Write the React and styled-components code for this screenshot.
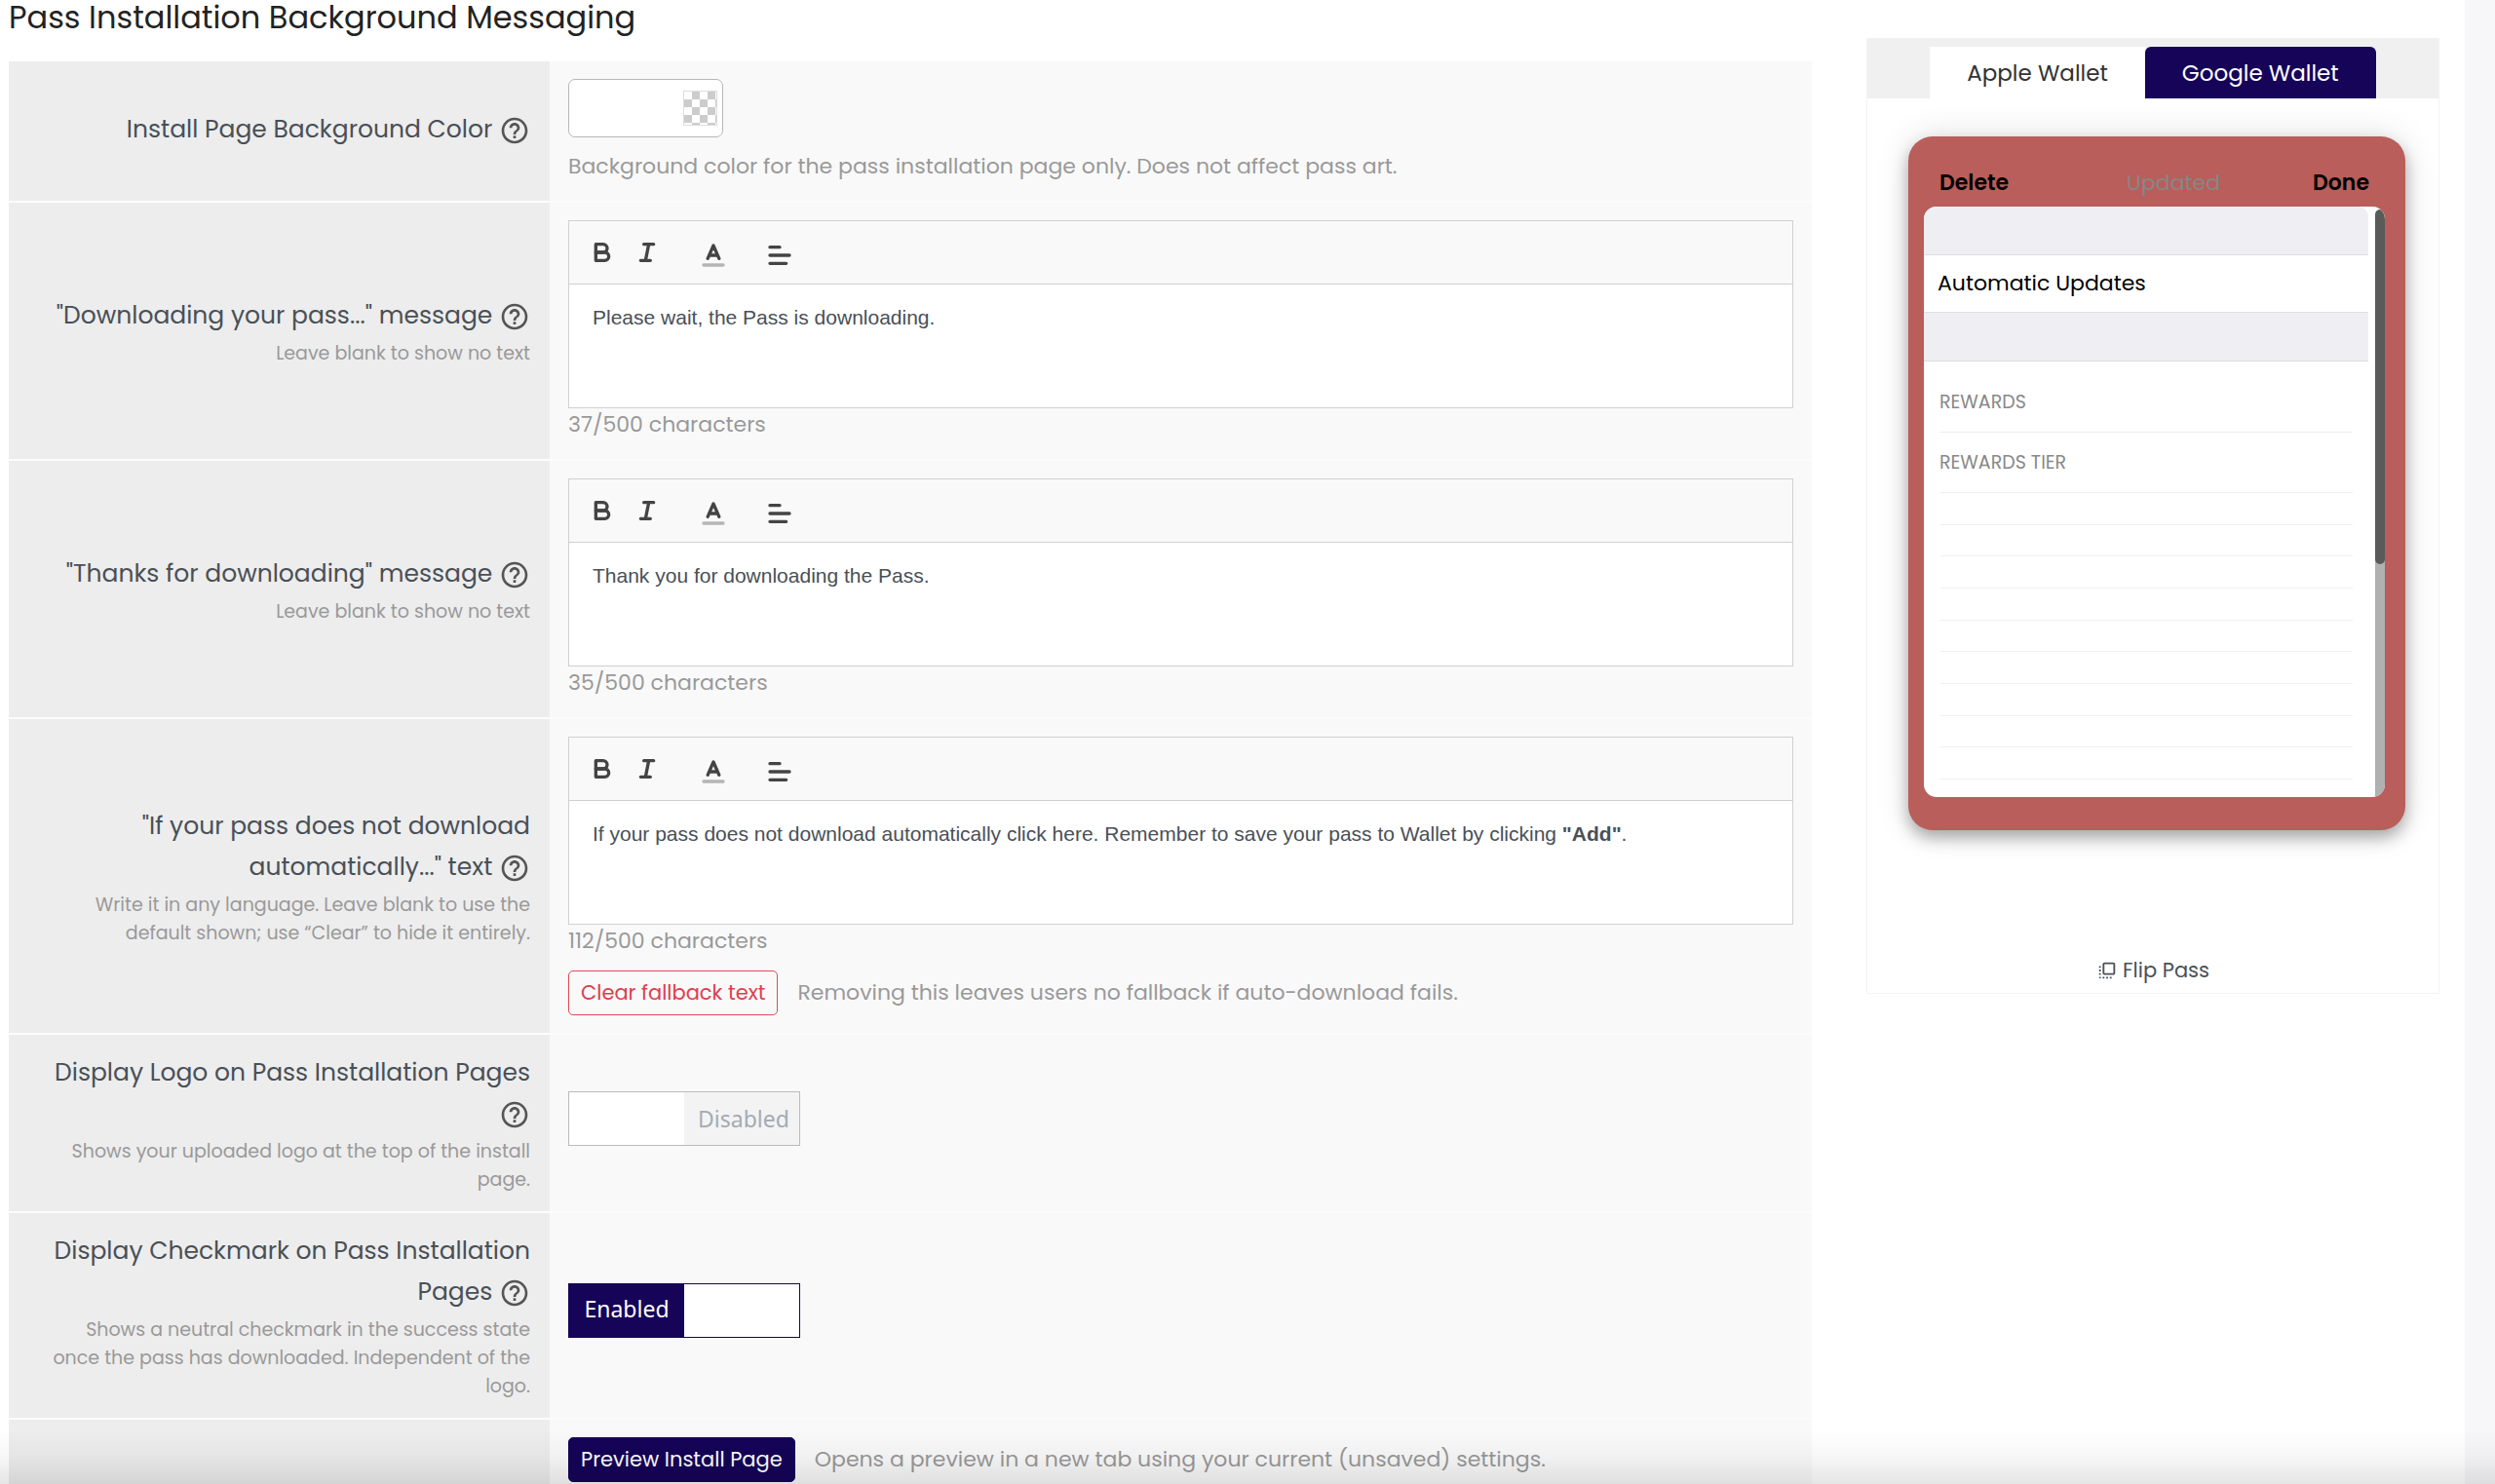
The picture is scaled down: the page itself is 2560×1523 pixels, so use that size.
import React, { useId, useState } from "react";
import styled, { createGlobalStyle } from "styled-components";
import { MdFlipToFront, MdHelpOutline } from "react-icons/md";

const navy = "#150458";
const ink = "#495057";
const muted = "#999";
const line = "#d0d0d0";

const GlobalStyle = createGlobalStyle`
  *, *::before, *::after { box-sizing: border-box; }
  body {
    margin: 0;
    background: #f7f7fa;
    color: ${ink};
    font-family: Poppins, Inter, "Noto Sans", sans-serif;
    font-size: 22px;
    line-height: 34px;
  }
  button, input, textarea { font: inherit; color: inherit; margin: 0; }
  button { cursor: pointer; }
`;

const Page = styled.div`
  display: flex;
  height: 100vh;
  padding-right: 31px;
  overflow: hidden;
`;

const Main = styled.main`
  flex: 1;
  display: flex;
  align-items: flex-start;
  gap: 56px;
  min-width: 0;
  padding: 0 26px 0 9px;
  background: #fff;
`;

const Settings = styled.section`
  flex: 1;
  min-width: 0;
`;

const Title = styled.h1`
  margin: 0;
  padding-bottom: 28px;
  color: #222;
  font-size: 32px;
  font-weight: 400;
  line-height: 35px;
`;

const FormRow = styled.div`
  display: grid;
  grid-template-columns: 30% 1fr;
  border-bottom: 2px solid #fcfcfc;
`;

const LabelCell = styled.div`
  display: flex;
  flex-direction: column;
  justify-content: center;
  padding: 18px 20px 18px 28px;
  background: #ededed;
  text-align: right;
`;

const LabelLine = styled.div`
  margin-bottom: 3px;
  font-size: 25px;
  line-height: 42px;
`;

const HelpButton = styled.button`
  display: inline-flex;
  padding: 0;
  border: 0;
  background: none;
  color: #555;
  vertical-align: middle;
`;

const Hint = styled.div`
  color: ${muted};
  font-size: 19px;
  line-height: 29px;
`;

const FieldCell = styled.div`
  display: flex;
  flex-direction: column;
  justify-content: center;
  align-items: flex-start;
  gap: 13px;
  padding: 18px 19px;
  background: #f9f9f9;
`;

const Help = styled.span`
  color: ${muted};
`;

const ColorBox = styled.div`
  display: flex;
  align-items: center;
  width: 159px;
  height: 60px;
  padding: 0 5px;
  border: 1px solid #b8b8b8;
  border-radius: 7px;
  background: #fff;
`;

const ColorInput = styled.input`
  flex: 1;
  min-width: 0;
  padding: 0;
  border: 0;
  outline: 0;
  background: none;
`;

const Swatch = styled.button`
  width: 35px;
  height: 36px;
  padding: 0;
  border: 1px solid #ddd;
  background: repeating-conic-gradient(#ccc 0 25%, #fff 0 50%) 0 0 / 16px 16px;
`;

const EditorBlock = styled.div`
  align-self: stretch;
`;

const EditorFrame = styled.div`
  border: 1px solid ${line};
  background: #fff;
`;

const Toolbar = styled.div`
  display: flex;
  align-items: center;
  gap: 22px;
  height: 65px;
  padding: 0 11px;
  border-bottom: 1px solid ${line};
  background: #f9f9f9;
`;

const ToolGroup = styled.div`
  display: flex;
`;

const Tool = styled.button`
  display: flex;
  padding: ${(p) => (p.$picker ? "10px 8px 4px" : "4px 8px")};
  border: 0;
  background: none;
`;

const ToolIcon = styled.svg`
  width: 30px;
  height: 30px;
  fill: none;
  stroke: #444;
  stroke-width: 2;
  stroke-linecap: round;
  stroke-linejoin: round;
`;

const PlainText = styled.textarea`
  display: block;
  width: 100%;
  height: 126px;
  padding: 19px 24px;
  border: 0;
  outline: 0;
  resize: none;
  background: #fff;
  && {
    font-family: Helvetica, "Liberation Sans", Arial, sans-serif;
    font-size: 21px;
    line-height: 30px;
  }
`;

const Counter = styled.div`
  color: ${muted};
`;

const Inline = styled.div`
  display: flex;
  align-items: center;
  gap: 20px;
`;

const Button = styled.button`
  height: 46px;
  padding: 0 12px;
  border: 1px solid ${(p) => (p.$danger ? "#e04a59" : navy)};
  border-radius: 5px;
  background: ${(p) => (p.$danger ? "transparent" : navy)};
  color: ${(p) => (p.$danger ? "#dc4050" : "#fff")};
  && { font-size: 21px; }
`;

const ToggleBox = styled.label`
  position: relative;
  display: grid;
  grid-template-columns: 1fr 1fr;
  width: 238px;
  height: 56px;
  margin-bottom: 10px;
  border: 1px solid ${(p) => (p.$on ? navy : "#bbb")};
  background: #fff;
  cursor: pointer;
`;

const ToggleInput = styled.input`
  position: absolute;
  inset: 0;
  width: 100%;
  height: 100%;
  opacity: 0;
  cursor: pointer;
`;

const ToggleText = styled.span`
  display: flex;
  align-items: center;
  justify-content: center;
  grid-column: ${(p) => (p.$on ? 1 : 2)};
  padding: ${(p) => (p.$on ? "0 0 5px" : "0 0 0 4px")};
  background: ${(p) => (p.$on ? navy : "#f3f3f3")};
  color: ${(p) => (p.$on ? "#fff" : "#a4abb3")};
  font-family: "Noto Sans", sans-serif;
  font-size: 23px;
`;

const Preview = styled.aside`
  width: 588px;
  margin-top: 39px;
  border: 1px solid #f3f3f3;
`;

const Tabs = styled.div`
  display: flex;
  justify-content: center;
  padding-top: 8px;
  background: #f0f0f0;
`;

const Tab = styled.button`
  height: 53px;
  padding: 0 38px;
  border: 0;
  border-radius: ${(p) => (p.$active ? "6px 6px 0 0" : "0")};
  background: ${(p) => (p.$active ? navy : "#fff")};
  color: ${(p) => (p.$active ? "#fff" : "#333")};
  && { font-size: 23px; }
`;

const Stage = styled.div`
  padding: 39px 34px 0 42px;
`;

const PassCard = styled.div`
  padding: 31px 21px 34px 16px;
  border-radius: 25px;
  background: #b95e5a;
  box-shadow: 0 8px 16px rgba(0, 0, 0, 0.3), 0 0 36px rgba(0, 0, 0, 0.12);
`;

const PassHeader = styled.div`
  display: flex;
  gap: 95px;
  padding: 0 16px 7px;
`;

const PassAction = styled.button`
  padding: 0;
  border: 0;
  background: none;
  color: #000;
  && { font-weight: 600; }
  &:first-child { margin-right: auto; }
`;

const Updated = styled.span`
  color: #878787;
`;

const PassBody = styled.div`
  display: flex;
  justify-content: space-between;
  height: 606px;
  border-radius: 13px;
  background: #fff;
  overflow: hidden;
`;

const PassContent = styled.div`
  width: 456px;
  border-radius: 0 10px 0 0;
  overflow: hidden;
`;

const Band = styled.div`
  height: 50px;
  border-bottom: 1px solid #dedee2;
  background: #efeef3;
`;

const UpdatesRow = styled.div`
  height: 59px;
  padding: 12px 14px;
  border-bottom: 1px solid #dedee2;
  color: #000;
`;

const FieldList = styled.ul`
  margin: 0;
  padding: 11px 16px 0;
  list-style: none;
`;

const FieldItem = styled.li`
  height: 62px;
  padding: 14px 0;
  border-bottom: 1px solid #eee;
  color: #888;
  font-size: 19px;
`;

const BlankList = styled.div`
  display: grid;
  grid-auto-rows: 1fr;
  height: 294px;
  margin: 0 16px;
`;

const BlankLine = styled.div`
  border-bottom: 1px solid #f0f0f0;
`;

const ScrollTrack = styled.div`
  width: 10px;
  padding-top: 3px;
  background: linear-gradient(#fff 0 20px, #b0b0b0 20px);
`;

const ScrollThumb = styled.div`
  height: 364px;
  border-radius: 5px;
  background: #5a5a5a;
`;

const FlipButton = styled.button`
  display: flex;
  align-items: center;
  gap: 5px;
  margin: 127px auto 6px;
  padding: 0;
  border: 0;
  background: none;
  && { font-size: 21px; }
`;

const BottomShade = styled.div`
  position: fixed;
  inset: auto 0 0;
  height: 56px;
  background: linear-gradient(transparent, rgba(0, 0, 0, 0.03) 50%, rgba(0, 0, 0, 0.1));
  pointer-events: none;
`;

function Row({ label, htmlFor, hint, children }) {
  return (
    <FormRow>
      <LabelCell>
        {label && (
          <LabelLine>
            <label htmlFor={htmlFor}>{label}</label>{" "}
            <HelpButton type="button" aria-label="Help">
              <MdHelpOutline size={32} />
            </HelpButton>
          </LabelLine>
        )}
        {hint && <Hint>{hint}</Hint>}
      </LabelCell>
      <FieldCell>{children}</FieldCell>
    </FormRow>
  );
}

function Editor({ id, label, count, text, rich }) {
  return (
    <EditorBlock>
      <EditorFrame>
        <Toolbar>
          <ToolGroup>
            <Tool type="button" aria-label="Bold">
              <ToolIcon viewBox="0 0 18 18">
                <path d="M5,4H9.5A2.5,2.5,0,0,1,12,6.5v0A2.5,2.5,0,0,1,9.5,9H5V4Z" />
                <path d="M5,9h5.5A2.5,2.5,0,0,1,13,11.5v0A2.5,2.5,0,0,1,10.5,14H5V9Z" />
              </ToolIcon>
            </Tool>
            <Tool type="button" aria-label="Italic">
              <ToolIcon viewBox="0 0 18 18">
                <path d="M7 4H13M5 14H11M8 14L10 4" />
              </ToolIcon>
            </Tool>
          </ToolGroup>
          <Tool type="button" $picker aria-label="Text color">
            <ToolIcon viewBox="0 0 18 18">
              <path d="M3 15H15" stroke="#b5b5b5" />
              <path d="M5.5 11L9 3L12.5 11M11.63 9H6.38" />
            </ToolIcon>
          </Tool>
          <Tool type="button" $picker aria-label="Alignment">
            <ToolIcon viewBox="0 0 18 18">
              <path d="M3 4H9M3 9H15M3 14H13" />
            </ToolIcon>
          </Tool>
        </Toolbar>
        {rich ? (
          <PlainText as="div" id={id} role="textbox" aria-label={label} contentEditable suppressContentEditableWarning>
            {rich}
          </PlainText>
        ) : (
          <PlainText id={id} defaultValue={text} />
        )}
      </EditorFrame>
      <Counter>{count}/500 characters</Counter>
    </EditorBlock>
  );
}

function Toggle({ id, initial }) {
  const [on, setOn] = useState(initial);
  return (
    <ToggleBox $on={on}>
      <ToggleInput id={id} type="checkbox" checked={on} onChange={() => setOn(!on)} />
      <ToggleText $on={on}>{on ? "Enabled" : "Disabled"}</ToggleText>
    </ToggleBox>
  );
}

export default function App() {
  const base = useId();
  const id = (name) => base + name;
  return (
    <Page>
      <GlobalStyle />
      <Main>
        <Settings>
          <Title>Pass Installation Background Messaging</Title>
          <Row label="Install Page Background Color" htmlFor={id("color")}>
            <ColorBox>
              <ColorInput id={id("color")} type="text" />
              <Swatch type="button" aria-label="Pick color" />
            </ColorBox>
            <Help>Background color for the pass installation page only. Does not affect pass art.</Help>
          </Row>
          <Row label={'"Downloading your pass..." message'} htmlFor={id("wait")} hint="Leave blank to show no text">
            <Editor id={id("wait")} count={37} text="Please wait, the Pass is downloading." />
          </Row>
          <Row label={'"Thanks for downloading" message'} htmlFor={id("thanks")} hint="Leave blank to show no text">
            <Editor id={id("thanks")} count={35} text="Thank you for downloading the Pass." />
          </Row>
          <Row
            label={'"If your pass does not download automatically..." text'}
            htmlFor={id("fallback")}
            hint="Write it in any language. Leave blank to use the default shown; use “Clear” to hide it entirely."
          >
            <Editor
              id={id("fallback")}
              label="Fallback text"
              count={112}
              rich={
                <>
                  If your pass does not download automatically click here. Remember to save your pass to Wallet by
                  clicking <b>"Add"</b>.
                </>
              }
            />
            <Inline>
              <Button type="button" $danger>Clear fallback text</Button>
              <Help>Removing this leaves users no fallback if auto-download fails.</Help>
            </Inline>
          </Row>
          <Row
            label="Display Logo on Pass Installation Pages"
            htmlFor={id("logo")}
            hint="Shows your uploaded logo at the top of the install page."
          >
            <Toggle id={id("logo")} initial={false} />
          </Row>
          <Row
            label="Display Checkmark on Pass Installation Pages"
            htmlFor={id("check")}
            hint="Shows a neutral checkmark in the success state once the pass has downloaded. Independent of the logo."
          >
            <Toggle id={id("check")} initial={true} />
          </Row>
          <Row>
            <Inline>
              <Button type="button">Preview Install Page</Button>
              <Help>Opens a preview in a new tab using your current (unsaved) settings.</Help>
            </Inline>
          </Row>
        </Settings>
        <Preview>
          <Tabs role="tablist">
            <Tab type="button" role="tab" aria-selected="false">Apple Wallet</Tab>
            <Tab type="button" role="tab" aria-selected="true" $active>Google Wallet</Tab>
          </Tabs>
          <Stage>
            <PassCard>
              <PassHeader>
                <PassAction type="button">Delete</PassAction>
                <Updated>Updated</Updated>
                <PassAction type="button">Done</PassAction>
              </PassHeader>
              <PassBody>
                <PassContent>
                  <Band />
                  <UpdatesRow>Automatic Updates</UpdatesRow>
                  <Band />
                  <FieldList>
                    <FieldItem>REWARDS</FieldItem>
                    <FieldItem>REWARDS TIER</FieldItem>
                  </FieldList>
                  <BlankList>
                    {Array.from({ length: 9 }, (_, i) => (
                      <BlankLine key={i} />
                    ))}
                  </BlankList>
                </PassContent>
                <ScrollTrack>
                  <ScrollThumb />
                </ScrollTrack>
              </PassBody>
            </PassCard>
          </Stage>
          <FlipButton type="button">
            <MdFlipToFront size={22} />
            Flip Pass
          </FlipButton>
        </Preview>
      </Main>
      <BottomShade />
    </Page>
  );
}
